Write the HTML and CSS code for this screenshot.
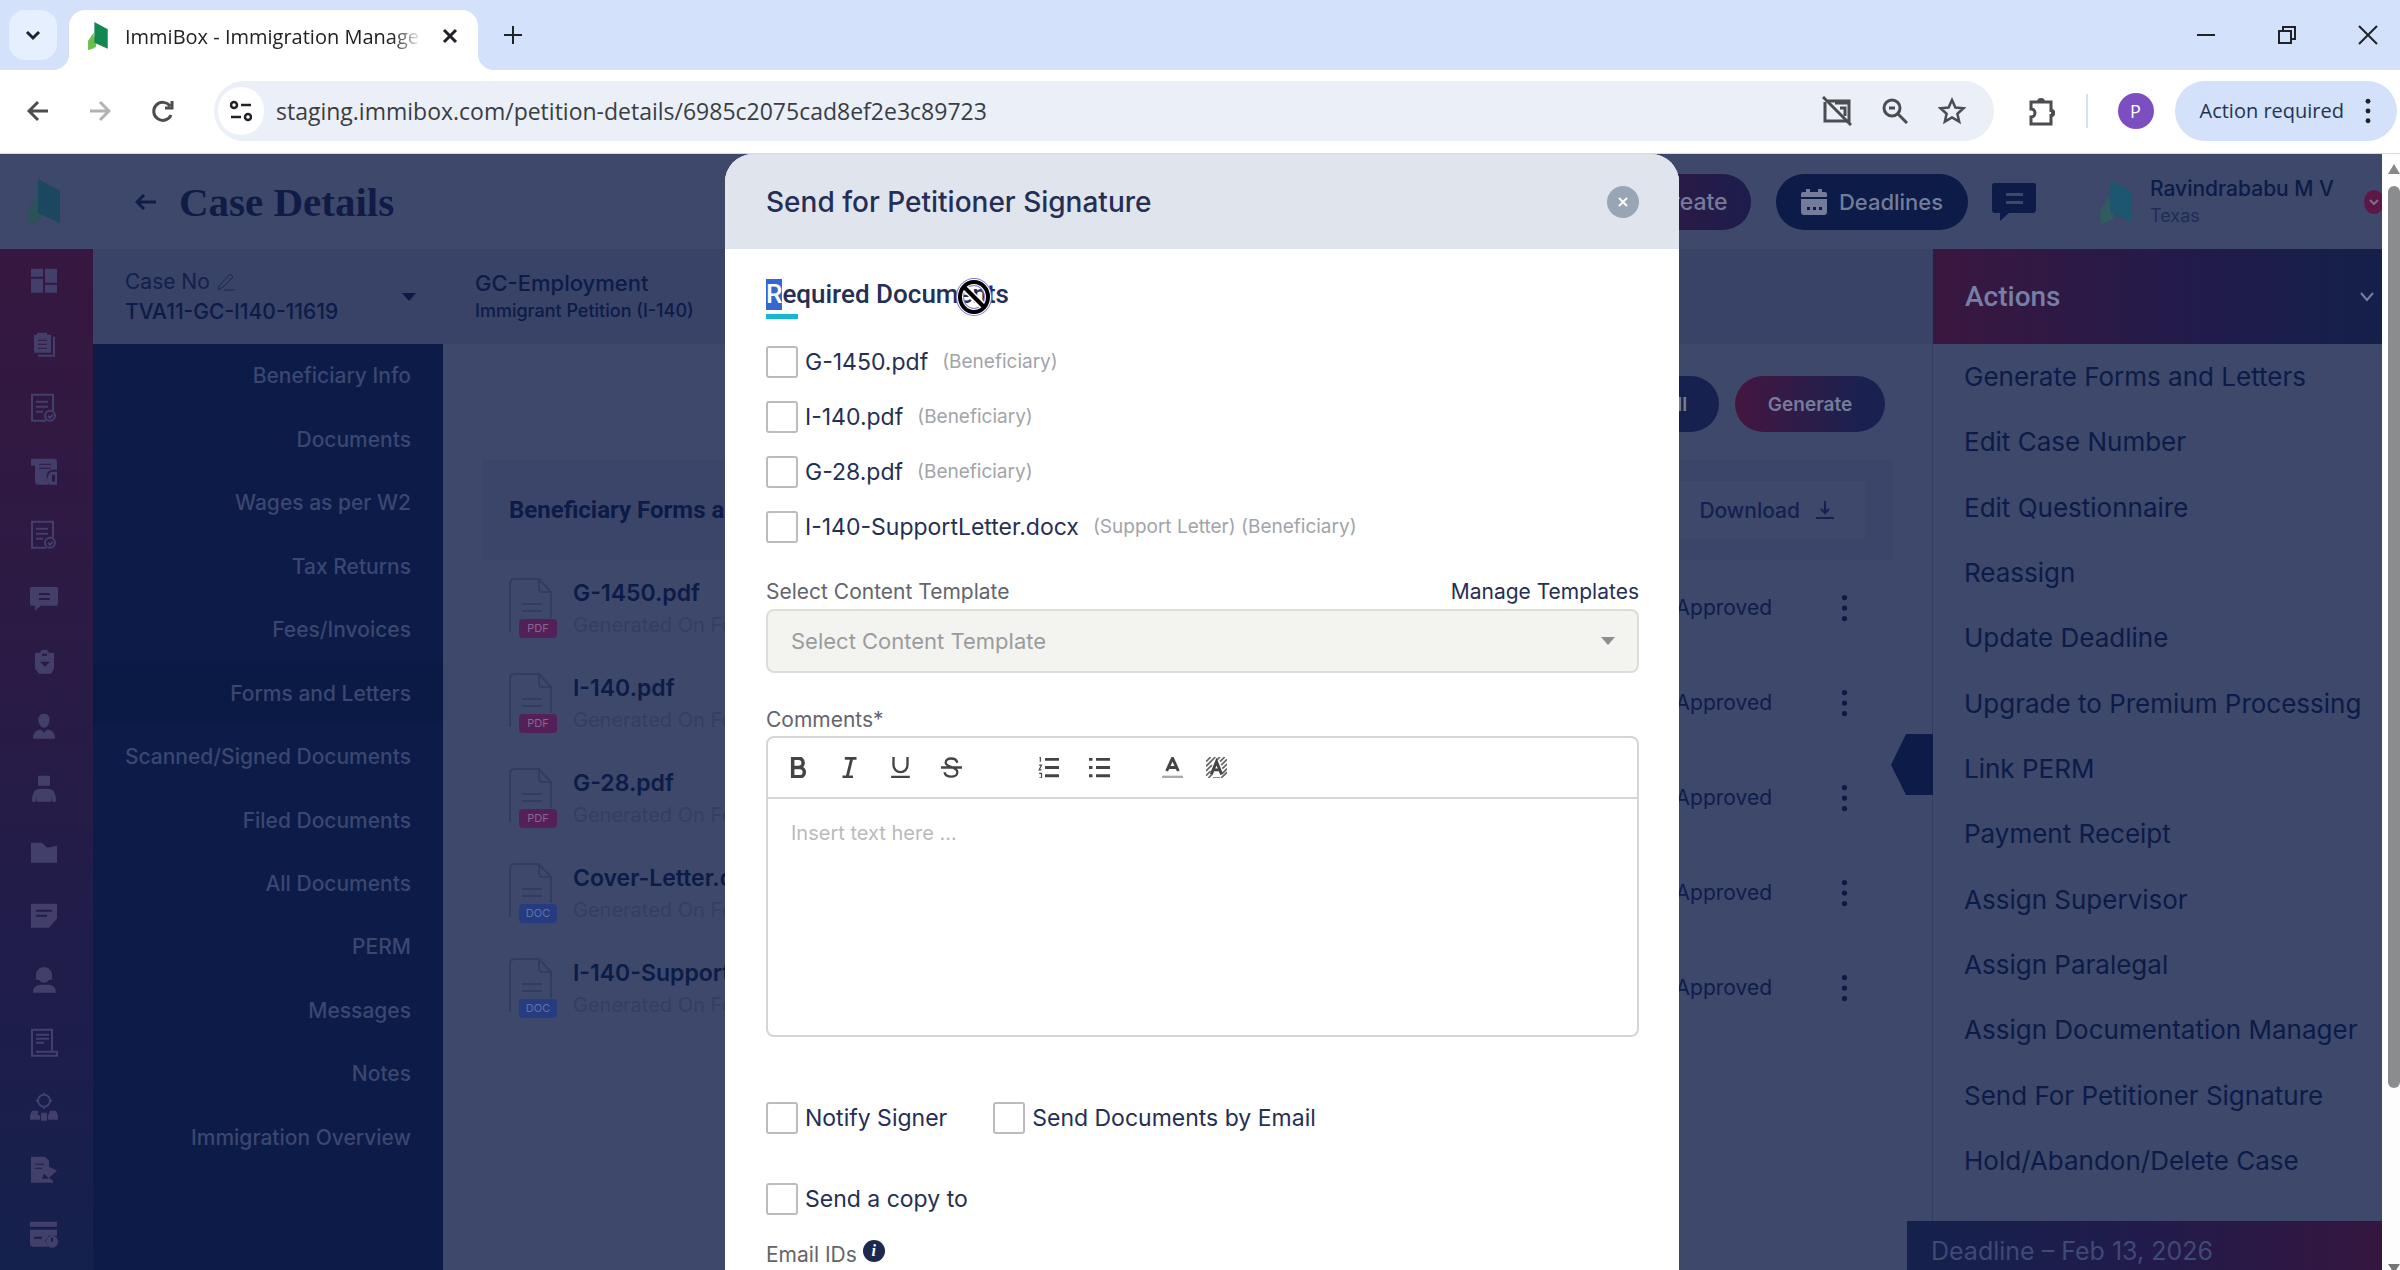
FILE: index.html
```html
<!DOCTYPE html>
<html lang="en">
<head>
<meta charset="utf-8">
<title>ImmiBox - Immigration Management</title>
<link rel="stylesheet" href="styles.css">
</head>
<body>
<svg class="defs" aria-hidden="true">
  <symbol id="logo" viewBox="0 0 32 46"><path fill="var(--leaf)" d="M9 17v26L0 46V31z"/><path fill="var(--leaf)" d="M0 31l13-9v19L0 46z"/><path fill="var(--tree)" d="M10 0l22 12v32L10 34z"/></symbol>
  <symbol id="kebab" viewBox="0 0 8 32"><circle cx="4" cy="4" r="3"/><circle cx="4" cy="16" r="3"/><circle cx="4" cy="28" r="3"/></symbol>
  <symbol id="chat" viewBox="0 0 44 38"><path fill-rule="evenodd" d="M3 0h38q3 0 3 3v23q0 4-3 4H17l-9 8v-8H3q-3 0-3-3V3q0-3 3-3zM14 10v3h17v-3zM14 18v3h17v-3z"/></symbol>
  <symbol id="pdf" viewBox="0 0 50 62"><path d="M2 55V7q0-5 5-5h24l12 13v26M31 2v9q0 4 4 4h8M14 27h20M14 34h20" fill="none" stroke="#313c60" stroke-width="2"/><rect x="11" y="42" width="38" height="19" rx="4" fill="#54205a"/></symbol>
  <symbol id="doc" viewBox="0 0 50 62"><path d="M2 55V7q0-5 5-5h24l12 13v26M31 2v9q0 4 4 4h8M14 27h20M14 34h20" fill="none" stroke="#313c60" stroke-width="2"/><rect x="11" y="42" width="38" height="19" rx="4" fill="#263b80"/></symbol>
</svg>

<header class="chrome">
  <div class="tabstrip">
    <button class="tab-search" aria-label="Search tabs"><svg width="18" height="18" viewBox="0 0 18 18"><path d="M3 6l6 6 6-6" class="ink" stroke-width="3"/></svg></button>
    <div class="tab">
      <svg class="tab-logo" width="24" height="28"><use href="#logo"/></svg>
      <span class="tab-title">ImmiBox - Immigration Manage</span>
      <button class="plain" aria-label="Close tab"><svg width="16" height="16" viewBox="0 0 16 16"><path d="M2 2l12 12M14 2L2 14" class="ink" stroke-width="3"/></svg></button>
    </div>
    <button class="plain new-tab" aria-label="New tab"><svg width="20" height="20" viewBox="0 0 20 20"><path d="M10 1v18M1 10h18" class="ink" stroke-width="2"/></svg></button>
    <div class="window-buttons">
      <button class="plain" aria-label="Minimize"><svg width="20" height="20" viewBox="0 0 20 20"><path d="M1 10h18" class="ink" stroke-width="2"/></svg></button>
      <button class="plain" aria-label="Restore"><svg width="20" height="20" viewBox="0 0 20 20"><path d="M2 6h12v12H2zM6 6V2h12v12h-4" class="ink" stroke-width="2"/></svg></button>
      <button class="plain" aria-label="Close window"><svg width="20" height="20" viewBox="0 0 20 20"><path d="M1 1l18 18M19 1L1 19" class="ink" stroke-width="2"/></svg></button>
    </div>
  </div>
  <div class="toolbar">
    <button class="plain" aria-label="Back"><svg width="22" height="22" viewBox="0 0 22 22"><path d="M21 11H2M11 2l-9 9 9 9" class="grey" stroke-width="3"/></svg></button>
    <button class="plain" aria-label="Forward"><svg width="22" height="22" viewBox="0 0 22 22"><path d="M1 11h19M11 2l9 9-9 9" class="pale" stroke-width="3"/></svg></button>
    <button class="plain" aria-label="Reload"><svg width="24" height="24" viewBox="0 0 24 24"><path d="M20 16a9 9 0 1 1-1-9M21 2v7h-7" class="grey" stroke-width="3"/></svg></button>
    <div class="omnibox">
      <button class="site-info" aria-label="View site information"><svg width="22" height="22" viewBox="0 0 22 22"><g class="ink" stroke-width="2.5"><circle cx="4" cy="5" r="3"/><path d="M11 5h10M1 17h10"/><circle cx="18" cy="17" r="3"/></g></svg></button>
      <input class="url" aria-label="Address" value="staging.immibox.com/petition-details/6985c2075cad8ef2e3c89723">
      <svg width="30" height="30" viewBox="0 0 30 30"><path d="M6 5h21v20H10M3 6v19h7M13 7h14M18 12h5v8" class="grey" stroke-width="3"/><path d="M1 1l28 28" class="grey" stroke-width="3"/></svg>
      <svg width="26" height="26" viewBox="0 0 26 26"><g class="grey" stroke-width="3"><circle cx="10" cy="10" r="8"/><path d="M7 10h6M16 16l9 9"/></g></svg>
      <svg width="28" height="28" viewBox="0 0 28 28"><path d="M14 3l3.400 7.500 8.100.8-6.100 5.400 1.800 8L14 20.500 6.800 24.700l1.800-8-6.100-5.400 8.100-.8z" class="grey" stroke-width="2.500"/></svg>
    </div>
    <svg class="puzzle" width="28" height="30" viewBox="0 0 28 30"><path d="M3 6h20v8.500a2 2 0 0 1 0 5V28H3v-7a4 4 0 0 0 0-8z" class="grey" stroke-width="3"/><path d="M9 6a4 4 0 0 1 8 0zM23 13a4 4 0 0 1 0 8z" fill="#4b4d51"/></svg>
    <span class="divider"></span>
    <span class="avatar">P</span>
    <button class="action-required">Action required <svg width="8" height="26"><use href="#kebab"/></svg></button>
  </div>
</header>

<div class="viewport">
  <div class="app">
    <div class="topbar">
      <div class="brand"><svg width="32" height="46"><use href="#logo"/></svg></div>
      <a class="back" href="#" aria-label="Back"><svg width="22" height="16" viewBox="0 0 22 16"><path d="M21 8H2M9 1L2 8l7 7" fill="none" stroke="#101d4b" stroke-width="3"/></svg></a>
      <h1>Case Details</h1>
      <div class="top-actions">
        <button class="pill create">Create</button>
        <button class="pill navy"><svg width="26" height="26" viewBox="0 0 26 26"><path fill="#747c99" fill-rule="evenodd" d="M0 10h26v13q0 3-3 3H3q-3 0-3-3zM6 18v3h3v-3zM12 18v3h3v-3zM18 18v3h3v-3zM0 8V5q0-2 2-2h3V0h4v3h8V0h4v3h3q2 0 2 2v3z"/></svg>Deadlines</button>
        <svg class="navy-icon" width="44" height="38"><use href="#chat"/></svg>
        <svg class="user-logo" width="34" height="44"><use href="#logo"/></svg>
        <div class="user"><span class="user-name">Ravindrababu M V</span><span class="user-place">Texas</span></div>
        <span class="user-dot"><svg width="10" height="6" viewBox="0 0 10 6"><path d="M1 1l4 4 4-4" fill="none" stroke="#7c7094" stroke-width="2"/></svg></span>
      </div>
    </div>
    <div class="columns">
      <nav class="rail" aria-label="Sections">
        <svg viewBox="0 0 28 28"><path d="M1 2h12v8H1zM1 12h12v14H1zM15 2h12v14H15zM15 18h12v8H15z"/></svg>
        <svg viewBox="0 0 28 28"><path fill-rule="evenodd" d="M4 4h3V2h10v2h4v18H4zM8 9v1h9V9zM8 13v1h9v-1zM8 17v1h9v-1z"/><path d="M23 6h2v20H8v-2h15z"/></svg>
        <svg viewBox="0 0 28 28"><g class="line"><path d="M16 27H2V1h21v16M6 8h12M6 13h12M6 18h7"/><circle cx="20" cy="22" r="5"/><path d="M18 22l2 2 3-3"/></g></svg>
        <svg viewBox="0 0 28 28"><path fill-rule="evenodd" d="M1 1h23q3 0 3 4v7h-5q-7 2-5 9l2 6H8q-3 0-3-4V8H1zM9 6v1h12V6zM9 10v1h12v-1z"/><path fill-rule="evenodd" d="M21 14h6v13h-8q-4-8 2-13zM22 17v7h3v-7z"/></svg>
        <svg viewBox="0 0 28 28"><g class="line"><path d="M16 27H2V1h21v16M6 8h12M6 13h12M6 18h7"/><circle cx="20" cy="22" r="5"/><path d="M18 22l2 2 3-3"/></g></svg>
        <svg viewBox="0 0 44 38"><use href="#chat"/></svg>
        <svg viewBox="0 0 28 28"><path fill-rule="evenodd" d="M5 5h5l2-3h5l2 3h5v16l-3 5H9l-4-5zM10 14l5 5 5-5zM12 6v2h5V6z"/></svg>
        <svg viewBox="0 0 28 28"><path d="M14 2c9 0 6 14 0 14S5 2 14 2zM3 27c0-8 5-9 8-9l3 3 3-3c3 0 8 1 8 9z"/></svg>
        <svg viewBox="0 0 28 28"><path d="M8 1h12v10H8zM2 27c0-10 3-13 9-13h6c6 0 9 3 9 13h-4v-6l-1 6H7l-1-6v6z"/></svg>
        <svg viewBox="0 0 28 28"><path d="M1 4h11l5 5 10-2v17H1z"/></svg>
        <svg viewBox="0 0 28 28"><path fill-rule="evenodd" d="M1 2h26v15l-8 9H1zM6 8v2h16V8zM6 13v2h11v-2z"/></svg>
        <svg viewBox="0 0 28 28"><path d="M6 9c0-10 16-10 16 0v5h-3c-2 4-8 4-10 0H6zM3 27c0-6 4-8 8-8h7c4 0 8 2 8 8z"/></svg>
        <svg viewBox="0 0 28 28"><g class="line"><path d="M22 23V1H2v26h25v-4H6M6 6h13M6 10h13M6 14h8"/></g></svg>
        <svg viewBox="0 0 28 28"><g class="line"><circle cx="14" cy="8" r="6"/><path d="M14 0v2M14 14v2M6 8h2M20 8h2"/></g><path d="M2 18h6v4l2 1v4H0v-4zM20 18h6l2 5v4H18v-4zM11 20h6v8h-6z"/></svg>
        <svg viewBox="0 0 28 28"><path fill-rule="evenodd" d="M1 1h14l4 4v6l8 4-8 7 4 3v2H1zM5 8v1h9V8zM5 12v1h7v-1zM12 23h7l-5-5z"/></svg>
        <svg viewBox="0 0 28 28"><path fill-rule="evenodd" d="M0 2h27v5H0zM0 10h27v6h-8l-4 5 3 6H3q-3 0-3-3zM4 17v2h8v-2z"/><path fill-rule="evenodd" d="M22 16a6 6 0 1 0 .1 0zM21 18h2v4h-2z"/></svg>
      </nav>
      <div class="workspace">
        <div class="casebar">
          <div class="case-no">
            <div><span class="case-label">Case No <svg width="20" height="18" viewBox="0 0 20 18"><path d="M3 13L14 1l3 3L7 14l-5 3zM8 17h11" fill="none" stroke="#1a2650" stroke-width="1"/></svg></span><strong>TVA11-GC-I140-11619</strong></div>
            <svg width="14" height="8" viewBox="0 0 14 8"><path fill="#0e1a46" d="M0 0h14L7 8z"/></svg>
          </div>
          <div class="case-type"><strong>GC-Employment</strong><span>Immigrant Petition (I-140)</span></div>
        </div>
        <div class="work-body">
          <nav class="side-menu" aria-label="Case sections">
            <a href="#">Beneficiary Info</a><a href="#">Documents</a><a href="#">Wages as per W2</a><a href="#">Tax Returns</a><a href="#">Fees/Invoices</a><a href="#" class="current">Forms and Letters</a><a href="#">Scanned/Signed Documents</a><a href="#">Filed Documents</a><a href="#">All Documents</a><a href="#">PERM</a><a href="#">Messages</a><a href="#">Notes</a><a href="#">Immigration Overview</a>
          </nav>
          <main class="content">
            <div class="content-actions"><button class="pill small download-all">Download All</button><button class="pill small generate">Generate</button></div>
            <div class="group-head"><h2>Beneficiary Forms and Letters</h2><button class="download">Download <svg width="20" height="20" viewBox="0 0 20 20"><path d="M10 1v12M6 9l4 4 4-4M1 18h18" fill="none" stroke="#142050" stroke-width="2"/></svg></button></div>
            <ul class="files">
              <li><svg width="50" height="62"><use href="#pdf"/></svg><span class="badge">PDF</span><div><strong>G-1450.pdf</strong><span>Generated On Feb</span></div><em>Approved</em><svg class="more" width="7" height="28"><use href="#kebab"/></svg></li>
              <li><svg width="50" height="62"><use href="#pdf"/></svg><span class="badge">PDF</span><div><strong>I-140.pdf</strong><span>Generated On Feb</span></div><em>Approved</em><svg class="more" width="7" height="28"><use href="#kebab"/></svg></li>
              <li><svg width="50" height="62"><use href="#pdf"/></svg><span class="badge">PDF</span><div><strong>G-28.pdf</strong><span>Generated On Feb</span></div><em>Approved</em><svg class="more" width="7" height="28"><use href="#kebab"/></svg></li>
              <li><svg width="50" height="62"><use href="#doc"/></svg><span class="badge doc">DOC</span><div><strong>Cover-Letter.docx</strong><span>Generated On Feb</span></div><em>Approved</em><svg class="more" width="7" height="28"><use href="#kebab"/></svg></li>
              <li><svg width="50" height="62"><use href="#doc"/></svg><span class="badge doc">DOC</span><div><strong>I-140-SupportLetter.docx</strong><span>Generated On Feb</span></div><em>Approved</em><svg class="more" width="7" height="28"><use href="#kebab"/></svg></li>
            </ul>
          </main>
        </div>
      </div>
      <aside class="actions">
        <svg class="panel-toggle" width="42" height="61" viewBox="0 0 42 61"><path fill="#0c1b48" d="M15 0h27v61H15L0 31z"/></svg>
        <h2>Actions <svg width="14" height="10" viewBox="0 0 14 10"><path d="M1 1l6 7 6-7" fill="none" stroke="#7680a5" stroke-width="2"/></svg></h2>
        <div class="action-list">
          <a href="#">Generate Forms and Letters</a><a href="#">Edit Case Number</a><a href="#">Edit Questionnaire</a><a href="#">Reassign</a><a href="#">Update Deadline</a><a href="#">Upgrade to Premium Processing</a><a href="#">Link PERM</a><a href="#">Payment Receipt</a><a href="#">Assign Supervisor</a><a href="#">Assign Paralegal</a><a href="#">Assign Documentation Manager</a><a href="#">Send For Petitioner Signature</a><a href="#">Hold/Abandon/Delete Case</a>
        </div>
        <div class="deadline">Deadline – Feb 13, 2026</div>
      </aside>
    </div>
  </div>
  <div class="scrollbar"><svg width="12" height="10" viewBox="0 0 12 10"><path fill="#888" d="M0 10L6 0l6 10z"/></svg><span class="thumb"></span><svg width="12" height="6" viewBox="0 0 12 6"><path fill="#777" d="M0 0h12L8 6H4z"/></svg></div>

  <section class="modal" role="dialog" aria-labelledby="dlg-title">
    <div class="modal-head"><h2 id="dlg-title">Send for Petitioner Signature</h2><button class="close" aria-label="Close"><svg width="10" height="10" viewBox="0 0 10 10"><path d="M1 1l8 8M9 1L1 9" fill="none" stroke="#fff" stroke-width="2"/></svg></button></div>
    <form class="modal-body">
      <h3><span class="selected">R</span>equired Documents<svg class="cursor" width="36" height="38" viewBox="0 0 36 38"><g fill="none"><ellipse cx="18" cy="19" rx="14" ry="15" stroke="#8a75dc" stroke-width="8"/><path d="M8 9l20 20" stroke="#fff" stroke-width="7"/><ellipse cx="18" cy="19" rx="14" ry="15" stroke="#fff" stroke-width="6"/><ellipse cx="18" cy="19" rx="14" ry="15" stroke="#000" stroke-width="4"/><path d="M8 9l20 20" stroke="#000" stroke-width="4"/></g></svg></h3>
      <div class="doc-list">
        <label class="check"><input type="checkbox">G-1450.pdf <small>(Beneficiary)</small></label>
        <label class="check"><input type="checkbox">I-140.pdf <small>(Beneficiary)</small></label>
        <label class="check"><input type="checkbox">G-28.pdf <small>(Beneficiary)</small></label>
        <label class="check"><input type="checkbox">I-140-SupportLetter.docx <small>(Support Letter) (Beneficiary)</small></label>
      </div>
      <div class="label-row"><label for="template">Select Content Template</label><a href="#">Manage Templates</a></div>
      <div class="select-wrap"><select id="template" disabled><option>Select Content Template</option></select><svg width="14" height="8" viewBox="0 0 14 8"><path fill="#8b8f91" d="M0 0h14L7 8z"/></svg></div>
      <label class="field-label" for="comments">Comments*</label>
      <div class="editor">
        <div class="tools">
          <button type="button" class="plain" aria-label="Bold"><svg viewBox="0 0 18 18"><path d="M4 9h6a3.500 3.500 0 0 1 0 8H4V1h5a4 4 0 0 1 0 8" class="tool" stroke-width="3"/></svg></button>
          <button type="button" class="plain" aria-label="Italic"><svg viewBox="0 0 18 18"><path d="M5 1h10M3 17h9M11 1L7 17" class="tool" stroke-width="2.500"/></svg></button>
          <button type="button" class="plain" aria-label="Underline"><svg viewBox="0 0 18 18"><path d="M3 0v7a6 6 0 0 0 12 0V0M1 17h16" class="tool" stroke-width="2"/></svg></button>
          <button type="button" class="plain" aria-label="Strikethrough"><svg viewBox="0 0 18 18"><path d="M14 5c-1-5-10-5-10 0 0 4 10 3 10 8 0 5-10 5-11 0M0 9h18" class="tool" stroke-width="2"/></svg></button>
          <button type="button" class="plain gap-wide" aria-label="Numbered list"><svg viewBox="0 0 18 18"><path d="M6 2h12M6 9h12M6 16h12" class="tool" stroke-width="2.500"/><path d="M1 0h1v4M1 7h2L1 11h2M1 14h2v4H1" class="tool" stroke-width="1"/></svg></button>
          <button type="button" class="plain" aria-label="Bulleted list"><svg viewBox="0 0 18 18"><path d="M6 2h12M6 9h12M6 16h12M0 2h3M0 9h3M0 16h3" class="tool" stroke-width="2.500"/></svg></button>
          <button type="button" class="plain gap-mid" aria-label="Text colour"><svg viewBox="0 0 18 18"><path d="M4 12L9 1l5 11M6 9h6" class="tool" stroke-width="2.500"/><path d="M0 17h18" stroke="#aaa" stroke-width="2"/></svg></button>
          <button type="button" class="plain tight" aria-label="Background colour"><svg viewBox="0 0 18 18"><path d="M0 4l4-4M0 8l8-8M0 12l5-5M0 16l4-4M9 3l3-3M12 4l4-4M13 7l5-5M14 10l4-4M14 14l4-4M13 18l5-5M2 18l3-3M6 18h6" stroke="#666" stroke-width="1.500" fill="none"/><path d="M4.500 15L9 4l4.500 11M6 11h6" class="tool" stroke-width="2.500"/></svg></button>
        </div>
        <textarea id="comments" placeholder="Insert text here ..."></textarea>
      </div>
      <div class="check-row"><label class="check"><input type="checkbox">Notify Signer</label><label class="check"><input type="checkbox">Send Documents by Email</label></div>
      <label class="check copy"><input type="checkbox">Send a copy to</label>
      <div class="email-label">Email IDs <span class="info">i</span></div>
    </form>
  </section>
</div>
</body>
</html>
```
FILE: styles.css
```css
* { box-sizing: border-box; }
body {
  --leaf: #6cc04a;
  --tree: #12874f;
  --page: #3d486b;
  --navy: #0c1b47;
  margin: 0;
  height: 100vh;
  display: flex;
  flex-direction: column;
  overflow: hidden;
  background: #fff;
  font-family: Inter, "Noto Sans", sans-serif;
  font-size: 21px;
}
h1, h2, h3, ul { margin: 0; padding: 0; }
a { color: inherit; text-decoration: none; }
button { font: inherit; border: 0; padding: 0; color: inherit; }
svg { display: block; flex: none; }
.defs { position: absolute; width: 0; height: 0; }
.plain { background: none; display: flex; align-items: center; justify-content: center; }
.ink { fill: none; stroke: #1f2227; }
.grey { fill: none; stroke: #4b4d51; }
.pale { fill: none; stroke: #b0b2b5; }
.tool { fill: none; stroke: #444; }

/* browser frame */
.chrome { flex: none; height: 154px; border-bottom: 1px solid #d5d8dd; font-family: "Open Sans", "Noto Sans", sans-serif; }
.tabstrip { height: 70px; background: #d3e1fb; display: flex; align-items: flex-start; padding: 10px 22px 0 9px; }
.tab-search { width: 48px; height: 50px; border-radius: 16px; background: #e6effd; display: flex; align-items: center; justify-content: center; }
.tab { position: relative; margin-left: 12px; width: 409px; height: 60px; background: #fff; border-radius: 16px 16px 0 0; display: flex; align-items: center; padding: 0 20px 8px 17px; }
.tab::before, .tab::after { content: ""; position: absolute; bottom: 0; width: 16px; height: 16px; }
.tab::before { right: 100%; background: radial-gradient(circle at 0 0, transparent 16px, #fff 16px); }
.tab::after { left: 100%; background: radial-gradient(circle at 100% 0, transparent 16px, #fff 16px); }
.tab-logo { margin-right: 15px; }
.tab-title { flex: 1; overflow: hidden; white-space: nowrap; font-size: 20px; color: #202124; margin-right: 20px; mask-image: linear-gradient(90deg, #000 90%, transparent); }
.new-tab { width: 20px; height: 50px; margin-left: 25px; }
.window-buttons { margin-left: auto; height: 50px; display: flex; gap: 61px; }
.toolbar { height: 83px; display: flex; align-items: center; padding: 0 3px 2px 27px; }
.toolbar > .plain { width: 22px; margin-right: 40px; }
.toolbar > .plain:nth-child(3) { width: 24px; margin-right: 39px; }
.omnibox { flex: 1; height: 60px; border-radius: 30px; background: #ebeff8; display: flex; align-items: center; gap: 30px; padding: 0 28px 0 4px; }
.site-info { width: 46px; height: 48px; border-radius: 24px; background: #fff; display: flex; align-items: center; justify-content: center; }
.url { flex: 1; border: 0; padding: 0; background: none; font: 23px "Open Sans", "Noto Sans", sans-serif; color: #3a3d42; margin-left: -18px; }
.puzzle { margin-left: 34px; }
.divider { width: 2px; height: 34px; background: #d3e1fb; margin: 0 30px; }
.avatar { width: 36px; height: 36px; border-radius: 50%; background: #7b4fc0; color: #fff; font-size: 18px; line-height: 36px; text-align: center; }
.action-required { margin-left: 21px; height: 60px; padding: 0 25px; border-radius: 30px; background: #d3e1fb; color: #24344f; font-size: 20px; display: flex; align-items: center; gap: 20px; }
.action-required svg { fill: #1f2227; }

/* page behind the dialog */
.viewport { position: relative; flex: 1; min-height: 0; display: flex; }
.app { --leaf: #2c5158; --tree: #1b4760; flex: 1; min-width: 0; display: flex; flex-direction: column; background: var(--page); color: var(--navy); overflow: hidden; }
.topbar { flex: none; height: 95px; display: flex; align-items: center; }
.brand { width: 93px; display: flex; padding-left: 28px; }
.back { margin: 0 22px 0 42px; }
h1 { font: bold 41px "Liberation Serif", serif; color: #101b46; white-space: nowrap; }
.top-actions { margin-left: auto; display: flex; align-items: center; }
.pill { height: 56px; border-radius: 28px; color: #747c99; font-weight: 500; display: flex; align-items: center; justify-content: center; }
.create { width: 156px; margin-right: 25px; padding-left: 36px; font-size: 23px; background: linear-gradient(90deg, #3a1740, #1c1d4c); }
.navy { width: 192px; gap: 12px; background: var(--navy); font-size: 22px; }
.navy-icon { margin-left: 24px; fill: var(--navy); }
.user-logo { margin: 0 17px 0 63px; --leaf: #315c5e; --tree: #1c566f; }
.user { width: 214px; display: flex; flex-direction: column; line-height: 27px; white-space: nowrap; }
.user-name { font-weight: 500; }
.user-place { font-size: 18px; color: #202c58; }
.user-dot { width: 20px; height: 24px; margin-right: -2px; border-radius: 50%; background: #5c1745; display: flex; align-items: center; justify-content: center; }
.columns { flex: 1; min-height: 0; display: flex; }
.rail { width: 93px; display: flex; flex-direction: column; padding-bottom: 5px; background: linear-gradient(180deg, #36173f, #2a1b45 40%, #1e1d4b 75%, #14214c); }
.rail svg { flex: 1; min-height: 0; width: 28px; margin-left: 30px; fill: #423f6b; }
.rail .line { fill: none; stroke: #423f6b; stroke-width: 2; }
.workspace { flex: 1; min-width: 0; display: flex; flex-direction: column; }
.casebar { height: 95px; display: flex; background: #384367; }
.case-no { width: 350px; padding: 0 27px 0 32px; display: flex; align-items: center; justify-content: space-between; }
.case-no div, .case-type { display: flex; flex-direction: column; line-height: 30px; white-space: nowrap; }
.case-no strong { font-weight: 500; }
.case-label { display: flex; align-items: center; gap: 6px; color: #131f4c; }
.case-type { padding-left: 32px; justify-content: center; line-height: 28px; }
.case-type strong { font-weight: 500; font-size: 22px; }
.case-type span { font-size: 18px; font-weight: 500; }
.work-body { flex: 1; min-height: 0; display: flex; }
.side-menu { width: 350px; background: var(--navy); padding-bottom: 101px; display: flex; flex-direction: column; color: #3b4771; font-weight: 500; }
.side-menu a { flex: 1; display: flex; align-items: center; justify-content: flex-end; padding-right: 32px; }
.side-menu .current { background: #0b1945; }
.content { flex: 1; min-width: 0; padding: 32px 40px 0 39px; }
.content-actions { display: flex; justify-content: flex-end; gap: 16px; padding-right: 7px; }
.small { font-size: 19px; font-weight: 600; }
.generate { width: 150px; background: linear-gradient(90deg, #44163f, #1a2150 85%); }
.download-all { width: 184px; background: #17214f; }
.group-head { margin-top: 28px; height: 100px; padding: 0 27px; background: #3a4569; display: flex; align-items: center; justify-content: space-between; }
.group-head h2 { font: bold 24px Roboto, sans-serif; }
.download { height: 58px; padding: 0 30px; background: var(--page); color: #142050; display: flex; align-items: center; gap: 15px; font-weight: 500; }
.files { list-style: none; }
.files li { position: relative; height: 95px; padding: 0 44px 0 26px; display: flex; align-items: center; }
.files div { display: flex; flex-direction: column; white-space: nowrap; margin-left: 15px; line-height: 30px; }
.files strong { font-weight: 600; font-size: 23px; line-height: 34px; }
.files div span { font-size: 20px; color: #333e63; }
.badge { width: 38px; margin: 41px 1px 0 -39px; font-size: 11px; line-height: 18px; color: #8a6790; text-align: center; }
.badge.doc { color: #5e73a8; }
.files em { margin-left: auto; margin-right: 69px; font-style: normal; color: #101c4a; }
.more { fill: #0e1a46; }
.actions { position: relative; width: 450px; display: flex; flex-direction: column; border-left: 1px solid #333e62; }
.panel-toggle { position: absolute; right: 100%; top: 485px; }
.actions h2 { height: 95px; padding: 0 8px 0 32px; display: flex; align-items: center; justify-content: space-between; font: 500 28px Roboto, sans-serif; color: #7680a5; background: linear-gradient(90deg, #3a173f, #211b4b 60%, #14204a); }
.action-list { flex: 1; display: flex; flex-direction: column; padding: 0 0 28px 31px; }
.action-list a { flex: 1; display: flex; align-items: center; font-size: 26px; white-space: nowrap; }
.deadline { height: 49px; margin-left: -26px; padding: 14px 0 0 24px; line-height: 32px; font-size: 25px; color: #3f4a75; background: linear-gradient(90deg, #14214c, #211b4b 50%, #35163f); overflow: hidden; }
.scrollbar { width: 18px; background: #fdfdfd; display: flex; flex-direction: column; align-items: flex-end; padding-top: 10px; }
.thumb { width: 12px; height: 902px; margin: 12px 0 auto; border-radius: 6px; background: #8b8c8e; }

/* dialog */
.modal { position: absolute; top: 0; bottom: 0; left: 50%; width: 954px; margin-left: -475px; overflow: hidden; background: #fff; border-radius: 28px 28px 0 0; color: #252f55; }
.modal-head { height: 95px; padding: 0 40px 0 41px; background: #e0e4ed; display: flex; align-items: center; justify-content: space-between; }
.modal-head h2 { font-size: 28px; font-weight: 500; line-height: 32px; }
.close { width: 32px; height: 32px; border-radius: 50%; background: #98a5b5; display: flex; align-items: center; justify-content: center; }
.modal-body { padding: 30px 40px 0 41px; }
h3 { position: relative; width: max-content; padding-bottom: 9px; font: 500 26px/31px Roboto, sans-serif; }
h3::after { content: ""; position: absolute; left: 0; bottom: 0; width: 32px; height: 5px; background: #14b8d0; }
.selected { display: inline-block; background: #3367d1; color: #fff; }
.cursor { position: absolute; right: 17px; top: -1px; }
.doc-list { margin-top: 27px; display: flex; flex-direction: column; gap: 23px; }
.check { display: flex; align-items: center; font-size: 23px; line-height: 32px; white-space: nowrap; }
.check input { appearance: none; width: 32px; height: 32px; margin: 0 7px 0 0; border: 2px solid #bcbcbc; border-radius: 3px; background: #fff; }
.check small { font-size: 19px; color: #a2a4a8; margin-left: 14px; }
.label-row { margin-top: 34px; display: flex; justify-content: space-between; line-height: 30px; color: #63656c; }
.label-row a { color: #252f55; }
.select-wrap { margin-top: 2px; position: relative; }
select { appearance: none; width: 100%; height: 64px; padding: 0 23px; border: 2px solid #dcdcd8; border-radius: 8px; background: #f3f3ef; color: #9a9ca0; font: 22px Inter, sans-serif; opacity: 1; }
.select-wrap svg { position: absolute; right: 24px; top: 28px; }
.field-label { display: block; margin-top: 31px; line-height: 32px; color: #63656c; }
.editor { height: 301px; border: 2px solid #d5d5d5; border-radius: 8px; display: flex; flex-direction: column; }
.tools { height: 61px; border-bottom: 2px solid #d5d5d5; display: flex; align-items: center; gap: 30px; padding-left: 20px; }
.tools svg { width: 21px; height: 21px; }
.tools .gap-wide { margin-left: 46px; }
.tools .gap-mid { margin-left: 22px; }
.tools .tight { margin-left: -7px; }
textarea { flex: 1; border: 0; resize: none; padding: 20px 23px; background: none; font: 20px/28px Inter, sans-serif; }
textarea::placeholder { color: #b9babc; }
.check-row { display: flex; gap: 46px; margin-top: 65px; }
.copy { margin-top: 49px; }
.email-label { margin-top: 24px; display: flex; align-items: center; gap: 6px; line-height: 32px; color: #63656c; }
.info { width: 22px; height: 22px; margin-bottom: 8px; border-radius: 50%; background: #1c2850; color: #fff; font: italic bold 16px/22px "Liberation Serif", serif; text-align: center; }
```
